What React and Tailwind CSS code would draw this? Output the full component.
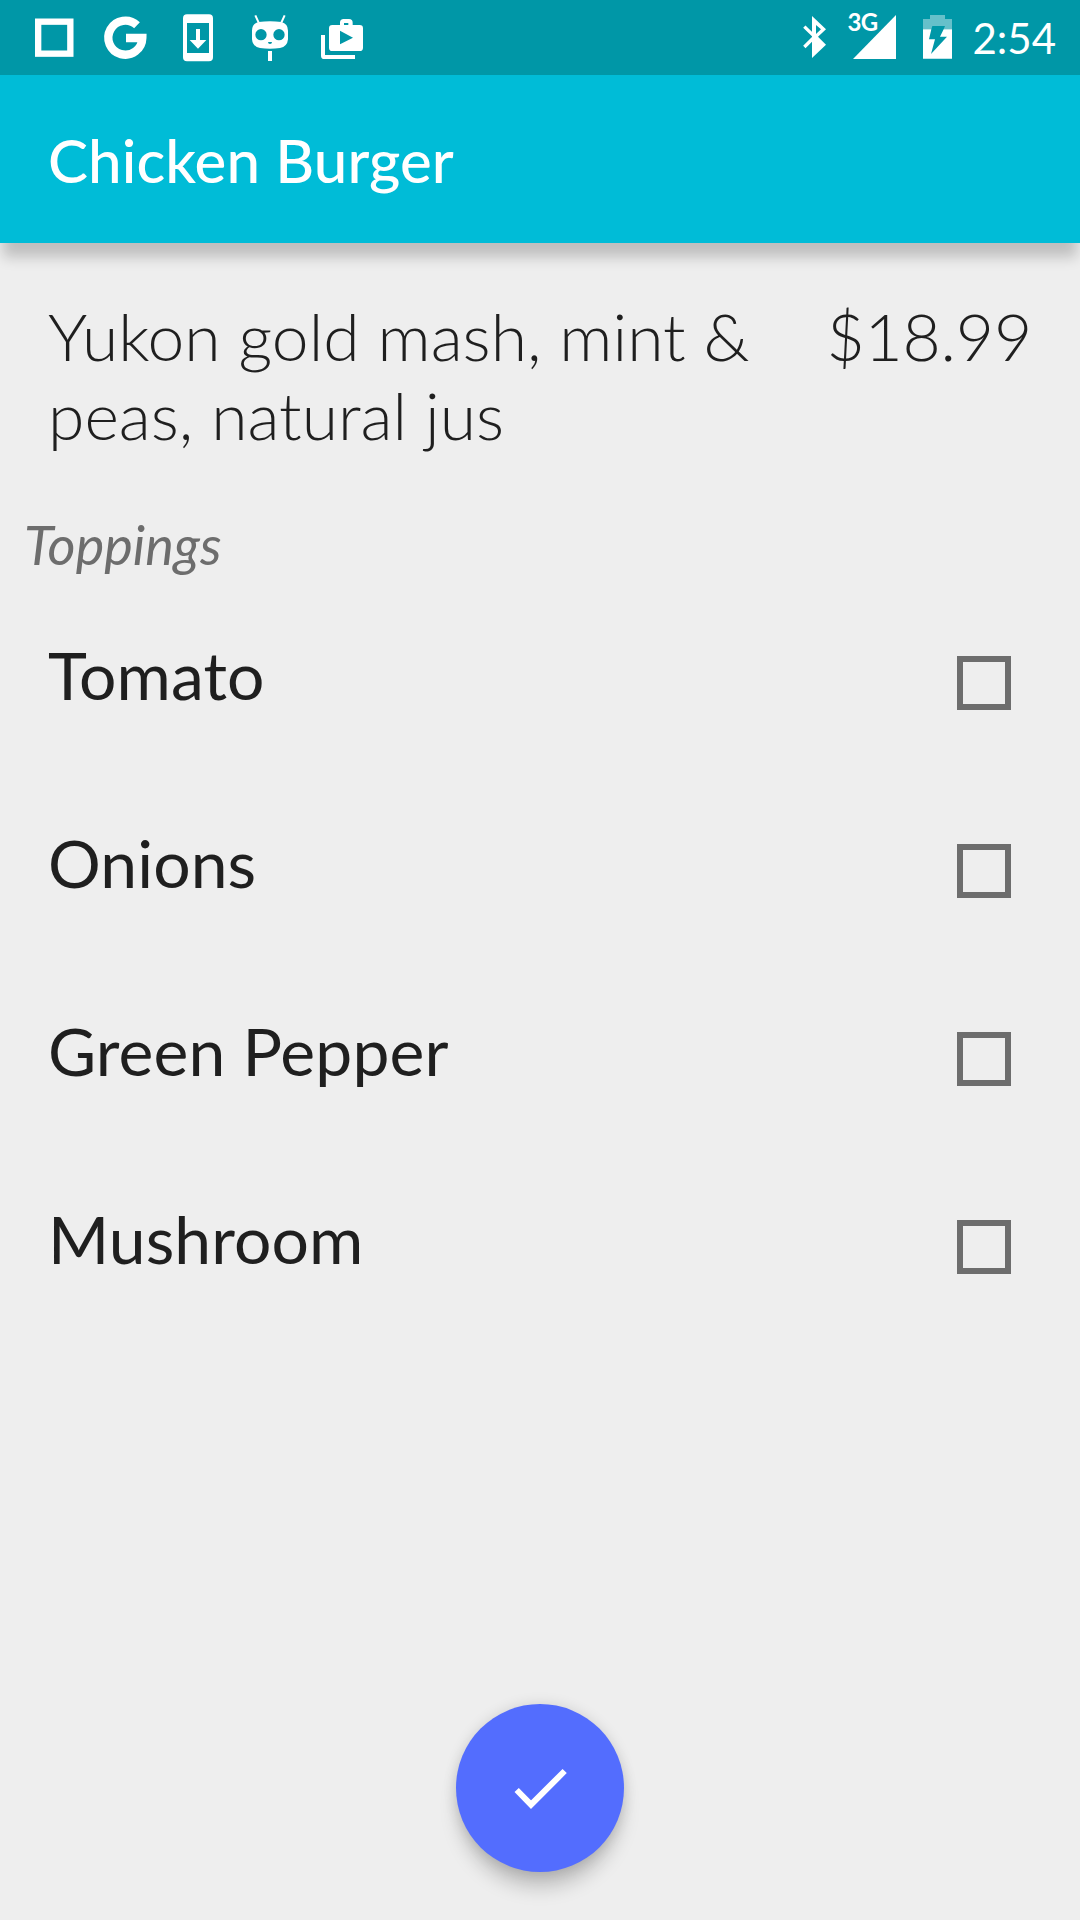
const toppings = ['Tomato', 'Onions', 'Green Pepper', 'Mushroom'];

function SquareIcon() {
  return (
    <svg className="h-[75px] w-[72px]" viewBox="54 0 216 225" fill="none" stroke="#fff">
      <rect x="114.5" y="65" width="96.5" height="96" strokeWidth="19" />
    </svg>
  );
}

function GoogleIcon() {
  return (
    <svg className="h-[75px] w-[72px]" viewBox="270 0 216 225" fill="none" stroke="#fff">
      <path d="M411 76A51 51 0 1 0 427 114H378" strokeWidth="25" />
    </svg>
  );
}

function UpdateIcon() {
  return (
    <svg className="h-[75px] w-[72px]" viewBox="486 0 216 225" fill="#fff" fillRule="evenodd">
      <path d="M561 43H627A12 12 0 0 1 639 55V172A12 12 0 0 1 627 184H561A12 12 0 0 1 549 172V55A12 12 0 0 1 561 43ZM561 69V159H627V69Z" />
      <path d="M588 87H600V120H619L594 146L569 120H588Z" />
    </svg>
  );
}

function CidIcon() {
  return (
    <svg className="h-[75px] w-[72px]" viewBox="702 0 216 225" fill="#fff">
      <path
        fillRule="evenodd"
        d="M776 66Q810 61 844 66Q864 71 864 92V118Q862 140 840 144Q810 149 780 144Q758 140 756 118V92Q756 71 776 66ZM766 104a17 17 0 1 0 34 0a17 17 0 1 0 -34 0ZM820 104a17 17 0 1 0 34 0a17 17 0 1 0 -34 0ZM804 126H816Q816 132 810 132Q804 132 804 126Z"
      />
      <path d="M766 46L776 68M854 46L844 68" stroke="#fff" strokeWidth="6" />
      <path d="M804 153H816V183H804Z" />
    </svg>
  );
}

function PlayStoreIcon() {
  return (
    <svg className="h-[75px] w-[72px]" viewBox="918 0 216 225" fill="#fff" fillRule="evenodd">
      <path d="M963 105H975V165H1065V177H973Q963 177 963 167Z" />
      <path d="M997 75H1020V68Q1020 57 1031 57H1047Q1058 57 1058 68V75H1079Q1089 75 1089 85V143Q1089 153 1079 153H997Q987 153 987 143V85Q987 75 997 75ZM1032 69V75H1045V69ZM1020 92V133L1059 113Z" />
    </svg>
  );
}

function BluetoothIcon() {
  return (
    <svg className="h-[75px] w-[28px]" viewBox="63 0 84 225" fill="#fff">
      <path fillRule="evenodd" d="M96 48L138 88L114 110L138 134L96 174V110ZM108 75V102L123 88Z" />
      <path d="M73 80L104 110L73 141" fill="none" stroke="#fff" strokeWidth="10" />
    </svg>
  );
}

function SignalIcon() {
  return (
    <div className="relative ml-[19px] h-[75px] w-[50px]">
      <svg className="h-[75px] w-[50px]" viewBox="204 0 150 225" fill="#fff">
        <path d="M348 45V177H219Z" />
      </svg>
      <span className="absolute top-[8px] -left-px text-[24px] leading-[28px] font-bold tracking-[-0.5px]">3G</span>
    </div>
  );
}

function BatteryIcon() {
  return (
    <svg className="ml-[20px] h-[75px] w-[39px]" viewBox="414 0 117 225" fill="#fff" fillRule="evenodd">
      <path
        fillOpacity="0.4"
        d="M450 45H495V57H516V88H491L495 78H457L454 88H429V57H450Z"
      />
      <path d="M429 88H454L447 118H465L453 162L501 110H480L491 88H516V176H429Z" />
    </svg>
  );
}

function StatusBar() {
  return (
    <div className="flex h-[75px] items-center justify-between bg-[#0097a7] pr-[24px] pl-[18px] text-white">
      <div className="flex">
        <SquareIcon />
        <GoogleIcon />
        <UpdateIcon />
        <CidIcon />
        <PlayStoreIcon />
      </div>
      <div className="flex items-center">
        <BluetoothIcon />
        <SignalIcon />
        <BatteryIcon />
        <span className="ml-[15px] text-[42px] leading-[50px]">2:54</span>
      </div>
    </div>
  );
}

function ToppingRow({ name }) {
  return (
    <label className="flex h-[188px] items-start justify-between pr-[69px] pl-[48px]">
      <span className="text-[66px] leading-[79px] font-normal tracking-[0.1px]">{name}</span>
      <input
        type="checkbox"
        className="mt-[21px] size-[54px] appearance-none border-[6px] border-[#6d6d6d]"
      />
    </label>
  );
}

export default function App() {
  return (
    <div className="flex h-[1920px] w-[1080px] flex-col overflow-hidden bg-[#eeeeee] font-['Lato',sans-serif] text-[#1f1f1f]">
      <StatusBar />
      <header className="flex h-[168px] items-center bg-[#00bcd7] pt-[2px] pl-[48px] text-white shadow-[0_17px_13px_-3px_rgba(0,0,0,0.2)]">
        <h1 className="text-[60px] leading-[72px] font-medium tracking-[0.1px]">Chicken Burger</h1>
      </header>
      <main className="flex grow flex-col">
        <section className="mt-[53px] flex justify-between pr-[48px] pl-[48px] text-[66px] leading-[79px] font-light">
          <p className="w-[720px]">Yukon gold mash, mint &amp; peas, natural jus</p>
          <p className="tracking-[-0.2px]">$18.99</p>
        </section>
        <h2 className="mt-[58px] pl-[24px] text-[54px] leading-[65px] font-normal text-[#6d6d6d] italic">Toppings</h2>
        <div className="mt-[58px]">
          {toppings.map((name) => (
            <ToppingRow key={name} name={name} />
          ))}
        </div>
        <button
          aria-label="Confirm"
          className="mt-auto mb-[48px] flex size-[168px] items-center justify-center self-center rounded-full bg-[#536dfe] shadow-[0_18px_20px_-4px_rgba(0,0,0,0.22),0_0_14px_rgba(0,0,0,0.12)]"
        >
          <svg className="size-[72px]" viewBox="222 216 216 216" fill="none" stroke="#fff" strokeWidth="18">
            <path d="M260 330L303 374L404 273" />
          </svg>
        </button>
      </main>
    </div>
  );
}
